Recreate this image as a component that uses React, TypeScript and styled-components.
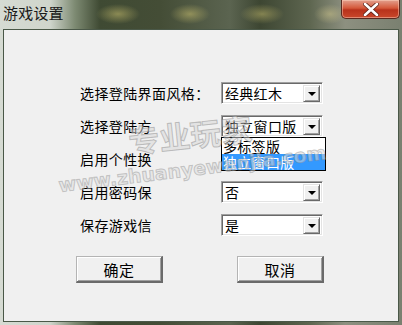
import React from "react";
import styled, { createGlobalStyle } from "styled-components";

const GlobalStyle = createGlobalStyle`
  html, body {
    margin: 0;
    padding: 0;
    background: #3d4535;
  }
  * { box-sizing: border-box; }
`;

const FONT = `"SimSun", "Noto Sans CJK SC", "Liberation Sans", sans-serif`;

const Window = styled.div`
  width: 402px;
  height: 325px;
  display: flex;
  flex-direction: column;
  position: relative;
  overflow: hidden;
  font-family: ${FONT};
  background:
    radial-gradient(ellipse 22px 10px at 118px 14px, rgba(200, 190, 110, 0.55), transparent),
    radial-gradient(ellipse 20px 10px at 190px 14px, rgba(200, 190, 110, 0.55), transparent),
    radial-gradient(ellipse 22px 10px at 262px 14px, rgba(200, 190, 110, 0.5), transparent),
    radial-gradient(ellipse 16px 10px at 330px 14px, rgba(210, 200, 140, 0.5), transparent),
    linear-gradient(90deg, #d6dbd3 0px, #cfd5cc 50px, #7d8a72 75px, #3f4a33 100px, #444d36 160px, #5b6450 230px, #3d4632 260px, #5e6650 310px, #8d9080 345px, #7a8070 402px);
`;

const TitleBar = styled.div`
  height: 29px;
  flex: none;
  display: flex;
  align-items: flex-start;
  justify-content: space-between;
  padding-left: 3px;
`;

const Title = styled.div`
  font-size: 15px;
  line-height: 15px;
  margin-top: 5px;
  color: #1a1a1a;
  letter-spacing: 0.2px;
`;

const CloseButton = styled.div`
  width: 59px;
  height: 19px;
  margin-right: 2px;
  border: 1px solid #5a2a20;
  border-top: none;
  border-radius: 0 0 5px 5px;
  background: linear-gradient(180deg, #e3a08e 0%, #d4583a 45%, #b8321b 55%, #c9472b 100%);
  box-shadow: inset 0 0 0 1px rgba(255, 220, 200, 0.45);
  display: flex;
  align-items: center;
  justify-content: center;
`;

const Client = styled.div`
  flex: 1;
  margin: 0 3px 3px 3px;
  border: 1px solid #4a5848;
  background: #f0f0f0;
  padding: 52px 0 0 76px;
  display: flex;
  flex-direction: column;
  position: relative;
`;

const Form = styled.div`
  display: flex;
  flex-direction: column;
  gap: 11px;
`;

const Row = styled.div`
  display: flex;
  align-items: center;
  height: 22px;
`;

const Label = styled.div`
  width: 141px;
  height: 18px;
  overflow: hidden;
  font-size: 14px;
  line-height: 18px;
  color: #000;
  letter-spacing: 0.4px;
  white-space: nowrap;
`;

const Combo = styled.div`
  width: 102px;
  height: 22px;
  position: relative;
  display: flex;
  align-items: center;
  background: #fff;
  border-top: 1px solid #a0a0a0;
  border-left: 1px solid #a0a0a0;
  border-right: 1px solid #fff;
  border-bottom: 1px solid #fff;
  box-shadow: inset 1px 1px 0 #696969, inset -1px -1px 0 #e3e3e3;
  padding: 2px 2px 2px 3px;
`;

const ComboText = styled.div`
  flex: 1;
  font-size: 14px;
  line-height: 18px;
  color: #000;
  letter-spacing: 0.3px;
  white-space: nowrap;
  overflow: hidden;
`;

const DropButton = styled.div`
  width: 17px;
  height: 17px;
  flex: none;
  background: #f0f0f0;
  border-top: 1px solid #e3e3e3;
  border-left: 1px solid #e3e3e3;
  border-right: 1px solid #696969;
  border-bottom: 1px solid #696969;
  box-shadow: inset 1px 1px 0 #fff, inset -1px -1px 0 #a0a0a0;
  display: flex;
  align-items: center;
  justify-content: center;
`;

const Arrow = styled.div`
  width: 0;
  height: 0;
  border-left: 4px solid transparent;
  border-right: 4px solid transparent;
  border-top: 4px solid #000;
  margin-top: 1px;
`;

const ListPopup = styled.div`
  position: absolute;
  left: -1px;
  top: 21px;
  width: 105px;
  border: 1px solid #000;
  background: #fff;
  z-index: 2;
  display: flex;
  flex-direction: column;
`;

const ListItem = styled.div<{ $selected?: boolean }>`
  height: 16px;
  font-size: 14px;
  line-height: 16px;
  padding-left: 1px;
  letter-spacing: 0.3px;
  white-space: nowrap;
  background: ${(p) => (p.$selected ? "#3399ff" : "#fff")};
  color: ${(p) => (p.$selected ? "#fff" : "#000")};
`;

const ButtonRow = styled.div`
  display: flex;
  gap: 74px;
  margin-top: 20px;
  margin-left: -4px;
`;

const Button = styled.div`
  width: 87px;
  height: 27px;
  display: flex;
  align-items: center;
  justify-content: center;
  background: #f0f0f0;
  border-top: 1px solid #b4b4b4;
  border-left: 1px solid #b4b4b4;
  border-right: 2px solid #6a6a6a;
  border-bottom: 2px solid #6a6a6a;
  box-shadow: inset 1px 1px 0 #fff, inset -1px -1px 0 #a0a0a0;
  font-size: 15px;
  letter-spacing: 0.5px;
  color: #000;
`;

const Watermark = styled.div`
  position: absolute;
  inset: 0;
  pointer-events: none;
  z-index: 3;
`;

const WatermarkTitle = styled.div`
  position: absolute;
  left: 128px;
  top: 116px;
  font-size: 31px;
  line-height: 36px;
  font-family: "Noto Sans CJK SC", sans-serif;
  font-weight: 700;
  color: rgba(215, 215, 215, 0.5);
  -webkit-text-stroke: 1px rgba(130, 130, 130, 0.45);
  transform: rotate(-6deg);
  white-space: nowrap;
`;

const WatermarkUrl = styled.div`
  position: absolute;
  left: 60px;
  top: 174px;
  font-size: 19px;
  line-height: 22px;
  font-family: "DejaVu Sans", sans-serif;
  font-weight: 700;
  color: rgba(220, 220, 220, 0.5);
  -webkit-text-stroke: 1px rgba(130, 130, 130, 0.4);
  transform: rotate(-7deg);
  transform-origin: left bottom;
  white-space: nowrap;
`;

const CloseIcon = () => (
  <svg width="16" height="13" viewBox="0 0 16 13">
    <path d="M2 1 L14 12 M14 1 L2 12" stroke="#5a2218" strokeWidth="4.2" strokeLinecap="round" />
    <path d="M2 1 L14 12 M14 1 L2 12" stroke="#ffffff" strokeWidth="2.6" strokeLinecap="round" />
  </svg>
);

const Select = ({ value, children }: { value: string; children?: React.ReactNode }) => (
  <Combo>
    <ComboText>{value}</ComboText>
    <DropButton>
      <Arrow />
    </DropButton>
    {children}
  </Combo>
);

const rows = [
  { label: "选择登陆界面风格：", value: "经典红木" },
  { label: "选择登陆方式：", value: "独立窗口版", open: true },
  { label: "启用个性换肤：", value: "独立窗口版" },
  { label: "启用密码保护：", value: "否" },
  { label: "保存游戏信息：", value: "是" },
];

export default function App() {
  return (
    <>
      <GlobalStyle />
      <Window>
        <TitleBar>
          <Title>游戏设置</Title>
          <CloseButton>
            <CloseIcon />
          </CloseButton>
        </TitleBar>
        <Client>
          <Form>
            {rows.map((r, i) => (
              <Row key={i}>
                <Label>{i === 0 ? r.label : r.label.slice(0, 5)}</Label>
                <Select value={r.value}>
                  {r.open && (
                    <ListPopup>
                      <ListItem>多标签版</ListItem>
                      <ListItem $selected>独立窗口版</ListItem>
                    </ListPopup>
                  )}
                </Select>
              </Row>
            ))}
          </Form>
          <ButtonRow>
            <Button>确定</Button>
            <Button>取消</Button>
          </ButtonRow>
        </Client>
        <Watermark>
          <WatermarkTitle>专业玩家</WatermarkTitle>
          <WatermarkUrl>www.zhuanyewanjia.com</WatermarkUrl>
        </Watermark>
      </Window>
    </>
  );
}
